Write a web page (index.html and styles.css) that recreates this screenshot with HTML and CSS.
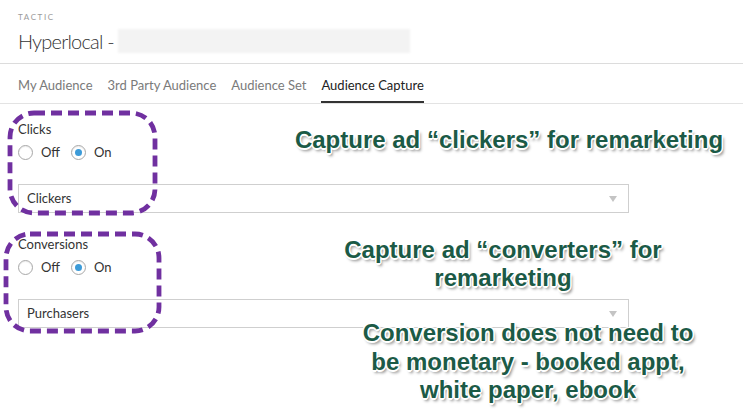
FILE: index.html
```html
<!DOCTYPE html>
<html>
<head>
<meta charset="utf-8">
<link rel="stylesheet" href="styles.css">
</head>
<body>
<header class="hdr">
  <div class="eyebrow">TACTIC</div>
  <div class="title">Hyperlocal - <span class="redact"></span></div>
</header>
<nav class="tabs">
  <span class="tab">My Audience</span>
  <span class="tab">3rd Party Audience</span>
  <span class="tab">Audience Set</span>
  <span class="tab active">Audience Capture</span>
</nav>
<main class="form">
  <section class="field">
    <div class="label">Clicks</div>
    <div class="radios">
      <span class="radio"></span><span class="rlabel">Off</span>
      <span class="radio on"></span><span class="rlabel">On</span>
    </div>
    <div class="select">Clickers<span class="caret"></span></div>
  </section>
  <section class="field">
    <div class="label">Conversions</div>
    <div class="radios">
      <span class="radio"></span><span class="rlabel">Off</span>
      <span class="radio on"></span><span class="rlabel">On</span>
    </div>
    <div class="select">Purchasers<span class="caret"></span></div>
  </section>
</main>
<svg class="marks" width="743" height="415" viewBox="0 0 743 415">
  <rect x="10" y="113" width="145" height="100" rx="24" class="dash"/>
  <rect x="6" y="234" width="153" height="97" rx="24" class="dash"/>
</svg>
<div class="note n1">Capture ad “clickers” for remarketing</div>
<div class="note n2">Capture ad “converters” for<br>remarketing</div>
<div class="note n3">Conversion does not need to<br>be monetary - booked appt,<br>white paper, ebook</div>
</body>
</html>
```
FILE: styles.css
```css
html, body { margin: 0; padding: 0; background: #fff; }
body {
  width: 743px; height: 415px; overflow: hidden; position: relative;
  font-family: "Lato", "Open Sans", sans-serif; color: #333;
}
.hdr {
  padding: 12px 18px 8px;
  border-bottom: 1px solid #dcdcdc;
}
.eyebrow {
  font-size: 8px; line-height: 10px; letter-spacing: 1.6px; color: #9a9a9a;
}
.title {
  margin-top: 5px; font-size: 20px; line-height: 28px; font-weight: 300; color: #333;
  letter-spacing: -0.8px;
  display: flex; align-items: center;
}
.redact {
  display: inline-block; width: 292px; height: 24px; margin-left: 4px;
  background: #f3f3f3; filter: blur(1px);
}
.tabs {
  display: flex; gap: 15px; padding: 0 18px; height: 39px;
  border-bottom: 1px solid #e3e3e3;
}
.tab {
  box-sizing: border-box; height: 39px; padding-top: 12px;
  font-size: 13px; line-height: 18px; color: #7a7a7a;
  border-bottom: 2px solid transparent;
}
.tab.active { color: #222; border-bottom-color: #333; }
.form { padding: 16px 18px 0; }
.field + .field { margin-top: 22px; }
.label { font-size: 13px; line-height: 18px; color: #333; }
.radios { display: flex; align-items: center; height: 18px; margin-top: 5px; }
.radio {
  box-sizing: border-box; width: 15px; height: 15px; border-radius: 50%;
  border: 1px solid #a8a8a8; background: #fff; position: relative;
  box-shadow: inset 0 1px 1px rgba(0,0,0,.08);
}
.radio.on::after {
  content: ""; position: absolute; left: 3px; top: 3px; width: 7px; height: 7px;
  border-radius: 50%; background: #3d9bd8;
}
.rlabel { font-size: 13px; line-height: 18px; color: #333; margin-left: 8px; margin-right: 11px; }
.select {
  margin-top: 23px; box-sizing: border-box; width: 611px; height: 29px;
  border: 1px solid #cfcfcf; padding-left: 8px;
  font-size: 13px; line-height: 27px; color: #333;
  display: flex; align-items: center; justify-content: space-between;
}
.caret {
  width: 0; height: 0; margin-right: 11px;
  border-left: 4px solid transparent; border-right: 4px solid transparent;
  border-top: 6px solid #c4c4c4;
}
.marks { position: absolute; left: 0; top: 0; pointer-events: none; }
.dash { fill: none; stroke: #7030a0; stroke-width: 4.8; stroke-dasharray: 11 6; }
.note {
  position: absolute; text-align: center;
  font-family: "Liberation Sans", Arial, sans-serif; font-weight: bold;
  font-size: 24px; line-height: 28px; color: #1b5a46;
  text-shadow: 1.5px 0 #fff, -1.5px 0 #fff, 0 1.5px #fff, 0 -1.5px #fff,
    1px 1px #fff, -1px -1px #fff, 1px -1px #fff, -1px 1px #fff,
    2px 3px 3px rgba(0,0,0,.45);
}
.n1 { left: 270px; width: 478px; top: 126px; }
.n2 { left: 310px; width: 386px; top: 236px; }
.n3 { left: 318px; width: 420px; top: 319px; line-height: 28.5px; }
```
